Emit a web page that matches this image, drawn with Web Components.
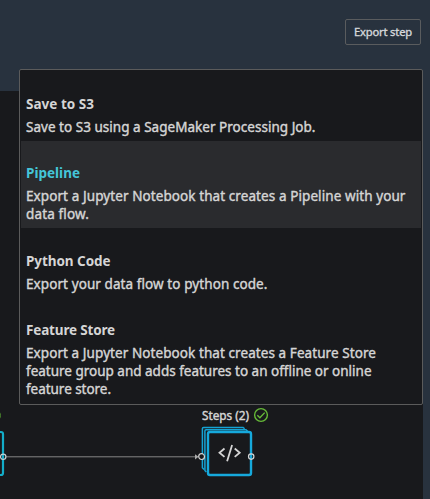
<!DOCTYPE html>
<html lang="en"><head><meta charset="utf-8"><title>Export step</title>
<style>html,body{margin:0;height:100%;overflow:hidden;background:#28323e}body{font-family:"Noto Sans","Open Sans",sans-serif;color:#d5d5d5}</style></head>
<body>
<export-page></export-page>
<script>
const define=(name,html,after)=>customElements.define(name,class extends HTMLElement{
  connectedCallback(){ if(this.shadowRoot)return; const r=this.attachShadow({mode:'open'}); r.innerHTML=html; if(after)after(this,r); }
});

// One line of text, tracked so that it fills the width given in w
define('text-line','<style>:host{display:block;white-space:nowrap;width:max-content}span{display:inline-block}</style><span><slot></slot></span>',(el,r)=>{
  const s=r.querySelector('span'),n=el.textContent.length,w=+el.getAttribute('w');
  s.style.letterSpacing=((w-s.getBoundingClientRect().width)/n).toFixed(3)+'px';
});

define('export-button',`<style>:host{display:block}
button{box-sizing:border-box;width:76px;height:26px;display:flex;align-items:center;justify-content:center;padding:0;margin:0;border:1px solid #5a5c5e;border-radius:2px;background:transparent;color:#d5d8db;font:400 11.2px/18px "Noto Sans",sans-serif;-webkit-text-stroke:.35px}</style>
<button><slot></slot></button>`);

define('export-option',`<style>:host{display:block;box-sizing:border-box;padding:23px 5px 5px}
:host([selected]){background:#2a2b2e;margin-bottom:1px}
.t{font:700 13.5px/18px "Noto Sans",sans-serif;margin-bottom:5px}
:host([selected]) .t{color:#44c5d8}
.d{font:400 13.5px/18px "Noto Sans",sans-serif;-webkit-text-stroke:.4px}</style>
<div class="t"><slot name="title"></slot></div><div class="d"><slot></slot></div>`);

define('export-menu',`<style>:host{display:block;box-sizing:border-box;width:404px;height:336px;border:1px solid #5b5b5b;border-radius:2px;background:#18191c;padding:2px 1px;overflow:hidden}</style><slot></slot>`);

define('flow-node',`<style>:host{display:block;width:82px;height:80px}
.h{display:flex;align-items:center;gap:4px;height:20px;font:400 11.8px/18px "Noto Sans",sans-serif;-webkit-text-stroke:.4px;padding-left:1px}
svg{display:block;overflow:visible}</style>
<div class="h"><slot></slot><svg width="16" height="16" viewBox="0 0 16 16" fill="none" stroke="#66ba38" stroke-width="1.4"><circle cx="8" cy="8" r="6.4"/><path d="M4.3 8.2l2.6 2.6 4.8-5.2"/></svg></div>
<svg width="60" height="54" viewBox="0 0 60 54" fill="none">
<g stroke="#14a3d4" stroke-width="1.5"><path d="M3 44.5l-1.6-1.8V3.6q0-1.2 1.2-1.2h39.5l1.5 1.4"/><path d="M5.3 47l-1.4-1.6V6q0-1.2 1.2-1.2H45l1.6 1.6"/></g>
<rect x="7" y="7" width="43" height="43" rx="2" fill="#18191c" stroke="#16a9dc" stroke-width="2.4"/>
<g stroke="#d5d5d5" stroke-width="1.8"><path d="M23.5 23.5l-5 4.2 5 4.2M33.7 23.5l5 4.2-5 4.2M31.1 20l-5 16.2"/></g>
<g stroke="#d5d5d5" stroke-width="1.2" fill="#18191c"><circle cx="0.6" cy="31.6" r="2.9"/><circle cx="50.2" cy="31.6" r="2.7" fill="none"/></g>
</svg>`);

define('flow-canvas',`<style>:host{display:block;position:relative;width:423px;height:408px;background:#18191c;overflow:hidden}
.edge{position:absolute;left:0;top:309px}flow-node{position:absolute;left:201px;top:314px}
.dot{position:absolute;left:-12px;top:318px;width:11px;height:11px;border:1px solid #4b8a2d;border-radius:50%}</style>
<i class="dot"></i>
<svg class="edge" width="210" height="80" viewBox="0 400 210 80" fill="none"><rect x="-40" y="432" width="43" height="43" rx="2" stroke="#13adc9" stroke-width="2.2"/>
<path d="M6 456.8H197" stroke="#858585"/><path d="M195 454.2l3.5 2.6-3.5 2.6z" fill="#aaa"/><circle cx="3.2" cy="456.8" r="2.7" stroke="#c4d0d3" stroke-width="1.2"/></svg>
<flow-node><text-line w="47">Steps (2)</text-line></flow-node>`);

define('export-page',`<style>:host{display:block;position:relative;width:430px;height:499px;background:#28323e;overflow:hidden}
header{box-sizing:border-box;height:91px;display:flex;justify-content:flex-end;padding:19px 9px 0 0}
export-menu{position:absolute;left:19px;top:69px}</style>
<header><export-button><text-line w="58">Export step</text-line></export-button></header>
<flow-canvas></flow-canvas>
<export-menu>
<export-option><text-line slot="title" w="68">Save to S3</text-line><text-line w="289.5">Save to S3 using a SageMaker Processing Job.</text-line></export-option>
<export-option selected><text-line slot="title" w="54">Pipeline</text-line><text-line w="379.5">Export a Jupyter Notebook that creates a Pipeline with your</text-line><text-line w="63">data flow.</text-line></export-option>
<export-option><text-line slot="title" w="84.5">Python Code</text-line><text-line w="241.5">Export your data flow to python code.</text-line></export-option>
<export-option><text-line slot="title" w="89">Feature Store</text-line><text-line w="350">Export a Jupyter Notebook that creates a Feature Store</text-line><text-line w="345.5">feature group and adds features to an offline or online</text-line><text-line w="85">feature store.</text-line></export-option>
</export-menu>`);
</script></body></html>
